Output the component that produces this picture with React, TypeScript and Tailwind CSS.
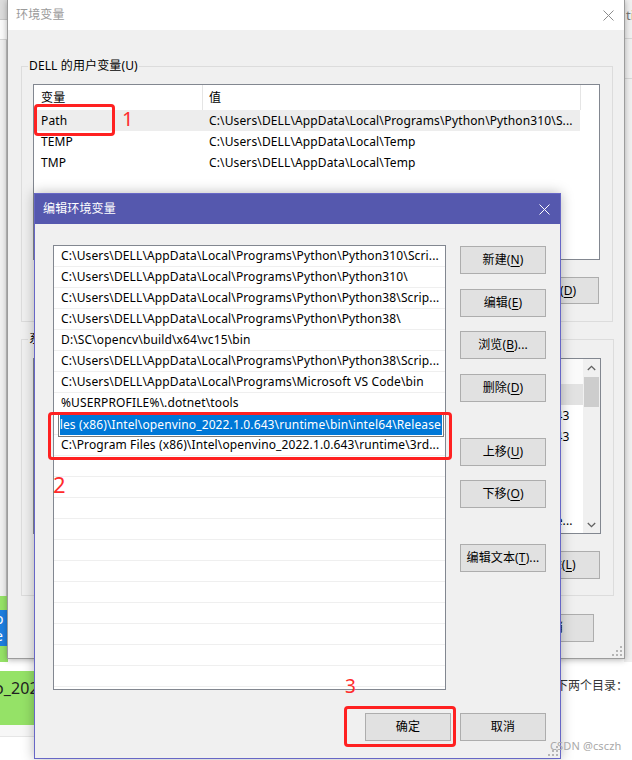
import React from "react";

function Btn({
  children,
  className = "",
}: {
  children: React.ReactNode;
  className?: string;
}) {
  return (
    <div
      className={`flex items-center justify-center shrink-0 bg-[#e1e1e1] border border-[#adadad] text-[12px] text-black whitespace-nowrap ${className}`}
    >
      {children}
    </div>
  );
}

function U({ children }: { children: React.ReactNode }) {
  return <span className="underline underline-offset-[2px]">{children}</span>;
}

function CloseX({ color }: { color: string }) {
  return (
    <svg width="11" height="11" viewBox="0 0 11 11">
      <path d="M0.5 0.5L10.5 10.5M10.5 0.5L0.5 10.5" stroke={color} strokeWidth="1" />
    </svg>
  );
}

function Grip() {
  return (
    <svg width="10" height="10" viewBox="0 0 10 10">
      <g fill="#b5b5b5">
        <rect x="8" y="0" width="2" height="2" />
        <rect x="8" y="4" width="2" height="2" />
        <rect x="4" y="4" width="2" height="2" />
        <rect x="8" y="8" width="2" height="2" />
        <rect x="4" y="8" width="2" height="2" />
        <rect x="0" y="8" width="2" height="2" />
      </g>
    </svg>
  );
}

function Background() {
  return (
    <>
      {/* window fragment at far left */}
      <div className="absolute left-0 top-0 w-[8px] h-[600px] bg-[#f0f0f0] flex flex-col">
        <div className="h-[20px] bg-[#dcdcdc] border-b border-[#c8c8c8]" />
        <div className="h-[20px] bg-[#fafafa] border-b border-[#d6d6d6]" />
        <div className="flex-1 border-r-2 border-[#c4c4c4]" />
      </div>
      <div className="absolute left-0 top-[596px] w-[8px] h-[66px] bg-[#95e267] pt-[14px] overflow-hidden">
        <div className="h-[36px] bg-[#1e7fe0] text-white text-[14px] leading-[17px] -ml-[5px]">
          <div>o</div>
          <div>e</div>
        </div>
      </div>
      {/* page fragment bottom-left */}
      <div className="absolute left-0 top-[671px] w-[34px] h-[54px] bg-[#95e267] overflow-hidden">
        <div className="text-[16px] leading-[22px] pt-[6px] -ml-[6px] text-[#222] whitespace-nowrap">
          o_2022
        </div>
      </div>
      <div className="absolute left-0 top-[725px] w-[34px] h-[12px] bg-[#f7f7f7] border-b border-[#e6e6e6]" />
      {/* window fragment at far right */}
      <div className="absolute left-[624px] top-0 w-[8px] h-[662px] bg-[#f0f0f0] overflow-hidden flex flex-col">
        <div className="h-[39px] border-b border-[#d8d8d8] pt-[6px] text-[13px] leading-[18px] text-[#777] pl-[2px]">
          ti
        </div>
        <div className="h-[40px] border-b border-[#d8d8d8]" />
      </div>
      <div className="absolute left-[556px] top-[677px] text-[12px] tracking-normal leading-[18px] text-[#333] whitespace-nowrap">
        下两个目录：
      </div>
    </>
  );
}

const userVars: [string, string][] = [
  ["Path", "C:\\Users\\DELL\\AppData\\Local\\Programs\\Python\\Python310\\S..."],
  ["TEMP", "C:\\Users\\DELL\\AppData\\Local\\Temp"],
  ["TMP", "C:\\Users\\DELL\\AppData\\Local\\Temp"],
];

const sysVars: [string, string, string][] = [
  ["ComSpec", "C:\\Windows\\system32\\cmd.exe", "pr-[200px]"],
  ["INTEL_OPENVINO_DIR", "C:\\Program Files (x86)\\Intel\\openvino_2022.1.0.643", "pr-[13px]"],
  ["OpenVINO_DIR", "C:\\Program Files (x86)\\Intel\\openvino_2022.1.0.643", "pr-[13px]"],
  ["NUMBER_OF_PROCESSORS", "8", "pr-[300px]"],
  ["OS", "Windows_NT", "pr-[300px]"],
  ["OPENCV_DIR", "D:\\SC\\opencv\\build", "pr-[200px]"],
  ["Path", "C:\\Program Files (x86)\\Intel\\openvino_2022.1.0.643\\runtime...", "pr-[10px]"],
  ["PATHEXT", ".COM;.EXE;.BAT;.CMD;.VBS", "pr-[200px]"],
];

function BackWindow() {
  return (
    <div className="absolute left-[7px] top-0 w-[618px] h-[659px] bg-[#f0f0f0] border-x border-b border-[#9c9c9c] shadow-[0_1px_6px_rgba(0,0,0,0.3)] flex flex-col">
      <div className="h-[30px] shrink-0 bg-white flex items-center justify-between pl-[8px] pr-[10px]">
        <span className="text-[12px] text-[#9a9a9a]">环境变量</span>
        <CloseX color="#8c8c8c" />
      </div>
      <div className="flex flex-col pl-[13px] pr-[11px] pt-[28px]">
        {/* user variables */}
        <fieldset className="h-[264px] border border-[#dcdcdc] p-0 m-0 flex flex-col">
          <legend className="ml-[6px] px-[1px] text-[12px] leading-[16px]">DELL 的用户变量(U)</legend>
          <div className="mt-[10px] ml-[11px] mr-[12px] h-[176px] border border-[#828790] bg-white flex flex-col overflow-hidden">
            <div className="h-[25px] shrink-0 flex">
              <div className="w-[169px] pl-[7px] flex items-center border-r border-[#e5e5e5]">变量</div>
              <div className="w-[378px] pl-[6px] flex items-center border-r border-[#e5e5e5]">值</div>
            </div>
            {userVars.map(([n, v], i) => (
              <div
                key={n}
                className={`h-[21px] shrink-0 w-[546px] flex items-center ${i === 0 ? "bg-[#ededed]" : ""}`}
              >
                <div className="w-[169px] pl-[7px] whitespace-nowrap">{n}</div>
                <div className="w-[377px] pl-[6px] whitespace-nowrap overflow-hidden">{v}</div>
              </div>
            ))}
          </div>
          <div className="mt-[17px] pr-[13px] flex justify-end gap-[10px]">
            <Btn className="w-[86px] h-[27px]">
              新建(<U>N</U>)...
            </Btn>
            <Btn className="w-[86px] h-[27px]">
              编辑(<U>E</U>)...
            </Btn>
            <Btn className="w-[86px] h-[27px]">
              删除(<U>D</U>)
            </Btn>
          </div>
        </fieldset>

        {/* system variables */}
        <fieldset className="mt-[9px] h-[265px] border border-[#dcdcdc] p-0 m-0 flex flex-col">
          <legend className="ml-[6px] px-[1px] text-[12px] leading-[16px]">系统变量(S)</legend>
          <div className="mt-[11px] ml-[11px] mr-[12px] h-[176px] border border-[#828790] bg-white flex overflow-hidden">
            <div className="flex-1 flex flex-col">
              <div className="h-[25px] shrink-0 flex bg-[#fafafa]">
                <div className="w-[169px] pl-[7px] flex items-center border-r border-[#e5e5e5]">变量</div>
                <div className="flex-1 pl-[6px] flex items-center">值</div>
              </div>
              {sysVars.map(([n, v, pr], i) => (
                <div
                  key={n}
                  className={`h-[21px] shrink-0 flex items-center ${i === 0 ? "bg-[#e2e2e2]" : ""}`}
                >
                  <div className="w-[169px] pl-[7px] whitespace-nowrap overflow-hidden">{n}</div>
                  <div className={`flex-1 flex justify-end whitespace-nowrap overflow-hidden ${pr}`}>{v}</div>
                </div>
              ))}
            </div>
            <div className="w-[17px] shrink-0 bg-[#f0f0f0] flex flex-col items-center">
              <div className="h-[17px] w-full flex items-center justify-center">
                <svg width="9" height="6" viewBox="0 0 9 6">
                  <path d="M0.8 5L4.5 1.3L8.2 5" stroke="#606060" strokeWidth="1.3" fill="none" />
                </svg>
              </div>
              <div className="mt-[1px] h-[30px] w-[15px] bg-[#cdcdcd]" />
              <div className="flex-1" />
              <div className="h-[17px] w-full flex items-center justify-center">
                <svg width="9" height="6" viewBox="0 0 9 6">
                  <path d="M0.8 1L4.5 4.7L8.2 1" stroke="#606060" strokeWidth="1.3" fill="none" />
                </svg>
              </div>
            </div>
          </div>
          <div className="mt-[17px] pr-[13px] flex justify-end gap-[10px]">
            <Btn className="w-[86px] h-[28px]">
              新建(<U>W</U>)...
            </Btn>
            <Btn className="w-[86px] h-[28px]">
              编辑(<U>I</U>)...
            </Btn>
            <Btn className="w-[86px] h-[28px]">
              删除(<U>L</U>)
            </Btn>
          </div>
        </fieldset>

        <div className="mt-[18px] pr-[19px] flex justify-end gap-[9px]">
          <Btn className="w-[86px] h-[28px]">确定</Btn>
          <Btn className="w-[86px] h-[28px]">取消</Btn>
        </div>
      </div>
      <div className="absolute right-[2px] bottom-[2px]">
        <Grip />
      </div>
    </div>
  );
}

const pathRows = [
  "C:\\Users\\DELL\\AppData\\Local\\Programs\\Python\\Python310\\Scri...",
  "C:\\Users\\DELL\\AppData\\Local\\Programs\\Python\\Python310\\",
  "C:\\Users\\DELL\\AppData\\Local\\Programs\\Python\\Python38\\Scrip...",
  "C:\\Users\\DELL\\AppData\\Local\\Programs\\Python\\Python38\\",
  "D:\\SC\\opencv\\build\\x64\\vc15\\bin",
  "C:\\Users\\DELL\\AppData\\Local\\Programs\\Python\\Python38\\Scrip...",
  "C:\\Users\\DELL\\AppData\\Local\\Programs\\Microsoft VS Code\\bin",
  "%USERPROFILE%\\.dotnet\\tools",
];

function EditDialog() {
  const empties = Array.from({ length: 11 }, (_, i) => i);
  return (
    <div className="absolute left-[34px] top-[193px] w-[527px] h-[566px] bg-[#f0f0f0] border border-[#6767c6] shadow-[0_0_12px_rgba(0,0,0,0.28)] flex flex-col">
      <div className="h-[30px] shrink-0 bg-[#5558ae] flex items-center justify-between pl-[8px] pr-[10px] text-white text-[12px]">
        <span>编辑环境变量</span>
        <CloseX color="#ffffff" />
      </div>
      <div className="flex pt-[21px] pl-[18px] pr-[14px]">
        <div className="w-[393px] h-[445px] shrink-0 border border-[#828790] bg-white flex flex-col">
          {pathRows.map((r, i) => (
            <div
              key={i}
              className="h-[21px] shrink-0 border-b border-[#efefef] pl-[7px] flex items-center whitespace-nowrap overflow-hidden"
            >
              {r}
            </div>
          ))}
          <div className="h-[21px] shrink-0 border-b border-[#efefef]">
            <div className="relative -mt-[1px] ml-[4px] mr-[1px] h-[24px] border border-[#7a7a7a] bg-white p-[1px]">
              <div className="h-full bg-[#0078d7] text-white flex justify-end items-center overflow-hidden whitespace-nowrap pr-[1px]">
                C:\Program Files (x86)\Intel\openvino_2022.1.0.643\runtime\bin\intel64\Release
              </div>
            </div>
          </div>
          <div className="h-[21px] shrink-0 border-b border-[#efefef] pl-[7px] flex items-center whitespace-nowrap overflow-hidden">
            C:\Program Files (x86)\Intel\openvino_2022.1.0.643\runtime\3rd...
          </div>
          {empties.map((i) => (
            <div key={`e${i}`} className="h-[21px] shrink-0 border-b border-[#efefef]" />
          ))}
        </div>
        <div className="ml-[14px] w-[86px] flex flex-col">
          <Btn className="mt-[1px] w-[86px] h-[28px]">
            新建(<U>N</U>)
          </Btn>
          <Btn className="mt-[15px] w-[86px] h-[28px]">
            编辑(<U>E</U>)
          </Btn>
          <Btn className="mt-[14px] w-[86px] h-[28px]">
            浏览(<U>B</U>)...
          </Btn>
          <Btn className="mt-[15px] w-[86px] h-[28px]">
            删除(<U>D</U>)
          </Btn>
          <Btn className="mt-[36px] w-[86px] h-[28px]">
            上移(<U>U</U>)
          </Btn>
          <Btn className="mt-[14px] w-[86px] h-[28px]">
            下移(<U>O</U>)
          </Btn>
          <Btn className="mt-[36px] w-[86px] h-[28px]">
            编辑文本(<U>T</U>)...
          </Btn>
        </div>
      </div>
      <div className="mt-[23px] pr-[14px] flex justify-end gap-[9px]">
        <Btn className="w-[86px] h-[28px]">确定</Btn>
        <Btn className="w-[86px] h-[28px]">取消</Btn>
      </div>
      <div className="absolute right-[2px] bottom-[2px]">
        <Grip />
      </div>
    </div>
  );
}

function Annotations() {
  return (
    <>
      <div className="absolute left-[34px] top-[104px] w-[81px] h-[32px] border-[3px] border-[#ff2121] rounded-[4px]" />
      <div className="absolute left-[122px] top-[109px] text-[20px] leading-[20px] text-[#ff2b2b]">1</div>
      <div className="absolute left-[53px] top-[473px] text-[22px] leading-[22px] text-[#ff2b2b]">2</div>
      <div className="absolute left-[48px] top-[412px] w-[404px] h-[48px] border-[3px] border-[#ff2121] rounded-[4px]" />
      <div className="absolute left-[344px] top-[706px] w-[112px] h-[41px] border-[3px] border-[#ff2121] rounded-[4px]" />
      <div className="absolute left-[345px] top-[677px] text-[19px] leading-[19px] text-[#ff2b2b]">3</div>
      <div className="absolute left-[550px] top-[738px] text-[11px] leading-[16px] text-[#a9a9a9] whitespace-nowrap">
        CSDN @csczh
      </div>
    </>
  );
}

export default function App() {
  return (
    <div className="relative w-[632px] h-[760px] overflow-hidden bg-white font-['Noto_Sans','Noto_Sans_CJK_SC',sans-serif] text-[12px] tracking-[0.13px] text-black">
      <Background />
      <BackWindow />
      <EditDialog />
      <Annotations />
    </div>
  );
}
